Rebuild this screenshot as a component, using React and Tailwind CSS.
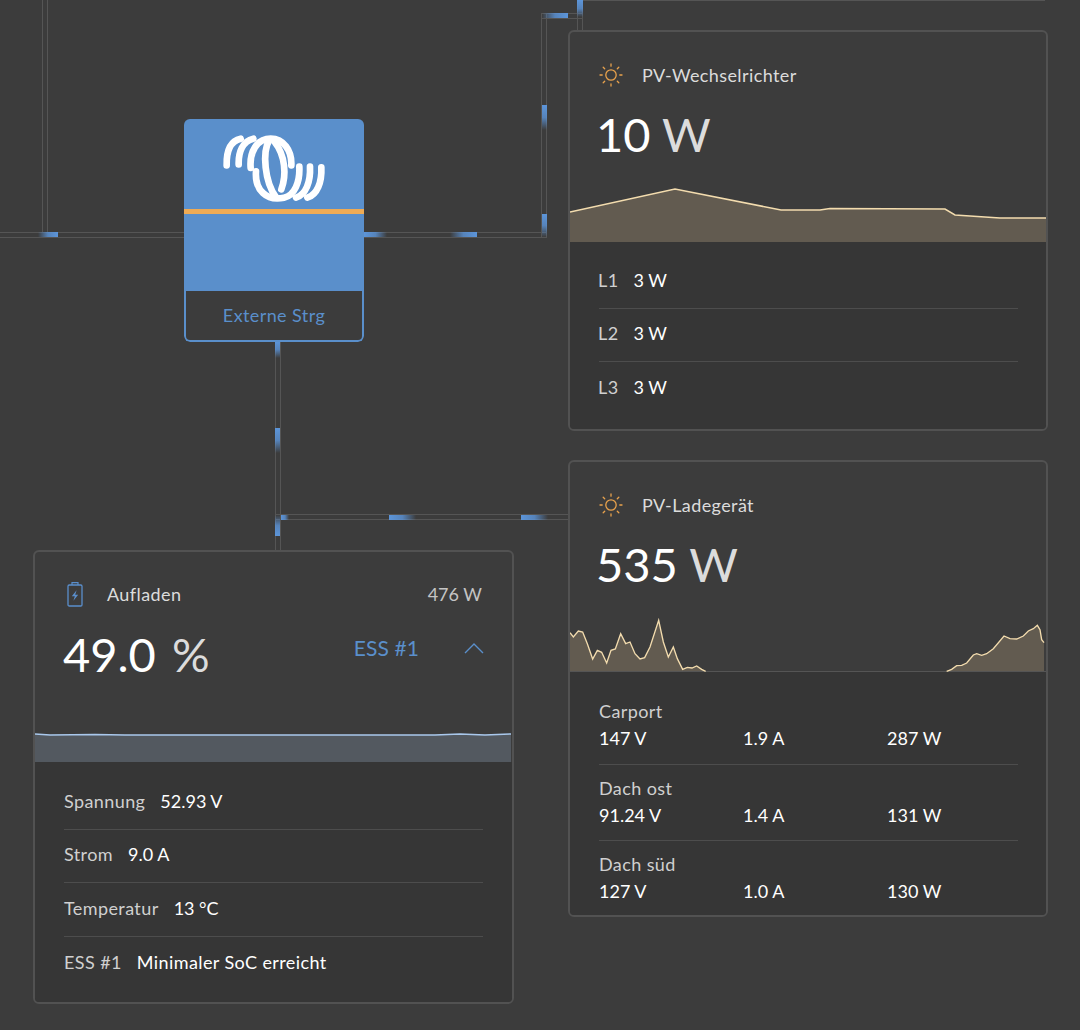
import React from 'react';

const FONT = 'font-["Lato","Open_Sans",sans-serif]';

// Wire pair drawn as two thin lines, placed on the diagram canvas
function HWire({ left, top, width }) {
  return (
    <div
      className="absolute h-[6px] border-y border-[#555555]"
      style={{ left, top, width }}
    />
  );
}

function VWire({ left, top, height }) {
  return (
    <div
      className="absolute w-[6px] border-x border-[#555555]"
      style={{ left, top, height }}
    />
  );
}

function Pulse({ left, top, width, height, dir }) {
  const grads = {
    r: 'bg-gradient-to-r from-[#5c95da00] via-[#5c95dacc] to-[#5c95da]',
    l: 'bg-gradient-to-l from-[#5c95da00] via-[#5c95dacc] to-[#5c95da]',
    b: 'bg-gradient-to-b from-[#5c95da00] via-[#5c95dacc] to-[#5c95da]',
    t: 'bg-gradient-to-t from-[#5c95da00] via-[#5c95dacc] to-[#5c95da]',
  };
  return <div className={`absolute ${grads[dir]}`} style={{ left, top, width, height }} />;
}

function SunIcon() {
  return (
    <svg width="24" height="24" viewBox="0 0 24 24" fill="none" stroke="#e9a24c" strokeWidth="1.3" strokeLinecap="round" className="shrink-0">
      <circle cx="12" cy="12" r="5.2" />
      <path d="M12 1v2.2M12 20.8V23M1 12h2.2M20.8 12H23M4.2 4.2l1.5 1.5M18.3 18.3l1.5 1.5M4.2 19.8l1.5-1.5M18.3 5.7l1.5-1.5" />
    </svg>
  );
}

function BatteryIcon() {
  return (
    <svg width="18" height="26" viewBox="0 0 18 26" fill="none" className="shrink-0">
      <path d="M6 4V1.6h6V4" stroke="#5a8ecb" strokeWidth="1.2" />
      <rect x="2" y="4" width="14" height="21" rx="1.2" stroke="#5a8ecb" strokeWidth="1.3" />
      <path d="M10.6 9.2 5.8 15.2h3l-1.4 4.6 4.8-6h-3z" fill="#5a8ecb" />
    </svg>
  );
}

function Logo() {
  return (
    <svg width="108" height="72" viewBox="0 0 324 216" fill="none" stroke="#ffffff" strokeWidth="20" strokeLinecap="round">
      <path d="M20 100C19 60 30 27 62 20" />
      <path d="M56 97C55 60 68 27 100 20" />
      <path d="M92 108C88 60 110 20 152 20C190 20 216 55 214 100" />
      <path d="M148 24C126 60 134 150 168 196" />
      <path d="M164 30C196 70 200 130 184 172" />
      <path d="M304 106C306 150 292 188 262 197" />
      <path d="M270 104C272 150 258 188 228 197" />
      <path d="M238 104C240 150 224 190 192 197C140 208 104 175 108 118" />
    </svg>
  );
}

function Value({ num, unit, wide }) {
  return (
    <div className="text-[47px] leading-[42px] tracking-normal text-white">
      {num} <span className={wide ? 'ml-[4px] text-[#dcdcdc]' : 'text-[#dcdcdc]'}>{unit}</span>
    </div>
  );
}

function InfoRow({ label, value, text, tight, last }) {
  return (
    <div className={`flex h-[53.5px] items-center gap-[15px] pb-[2px] ${last ? '' : 'border-b border-[#4d4d4d]'}`}>
      <span className={tight ? 'ml-[-1px] text-[#d0d0d0]' : 'text-[#d0d0d0]'}>{label}</span>
      <span className={text ? 'text-white' : 'tracking-normal text-white'}>{value}</span>
    </div>
  );
}

function TrackerRow({ name, v, a, p, last }) {
  return (
    <div className={`h-[76.5px] pt-[11px] ${last ? '' : 'border-b border-[#4d4d4d]'}`}>
      <div className="text-[#d0d0d0] leading-[24px]">{name}</div>
      <div className="mt-[3px] grid grid-cols-[144px_144px_1fr] leading-[24px] tracking-normal text-white">
        <span>{v}</span>
        <span>{a}</span>
        <span>{p}</span>
      </div>
    </div>
  );
}

function Card({ style, children }) {
  return (
    <div
      className="absolute flex flex-col overflow-hidden rounded-[6px] border-2 border-[#525252] bg-[#3c3c3c] text-[18px] tracking-[0.4px]"
      style={style}
    >
      {children}
    </div>
  );
}

const INVERTER_LINE = '0,25 105,2 211,23 250,23 260,21.5 375,22 385,28 430,31 476,31';
const PV_LINE =
  '30,97 40,110 55,92 68,95 82,130 98,176 112,150 125,156 140,188 153,150 166,146 182,100 197,130 210,125 225,160 240,176 254,172 270,140 296,60 310,125 325,170 340,140 352,175 368,207 382,201 396,203 410,197 425,207 437,213';
const PV_LINE_2 =
  '1160,213 1175,207 1190,196 1205,195 1220,188 1240,164 1250,160 1265,165 1280,160 1300,145 1332,107 1350,115 1370,116 1390,107 1405,92 1420,85 1432,75 1440,88 1445,118 1452,127';

export default function App() {
  return (
    <div className={`relative h-[1030px] w-[1080px] overflow-hidden bg-[#3c3c3c] ${FONT}`}>
      {/* wires */}
      <div className="absolute left-[580px] top-0 h-px w-[465px] bg-[#555555]" />
      <VWire left={42} top={0} height={233} />
      <HWire left={0} top={232} width={184} />
      <HWire left={364} top={232} width={183} />
      <VWire left={541} top={13} height={224} />
      <HWire left={541} top={13} width={42} />
      <VWire left={577} top={0} height={31} />
      <VWire left={275} top={341} height={210} />
      <HWire left={275} top={514} width={294} />

      <Pulse left={38} top={232} width={20} height={5} dir="r" />
      <Pulse left={364} top={232} width={23} height={5} dir="l" />
      <Pulse left={450} top={232} width={27} height={5} dir="r" />
      <Pulse left={542} top={214} width={5} height={23} dir="t" />
      <Pulse left={542} top={105} width={5} height={25} dir="t" />
      <Pulse left={542} top={13} width={26} height={5} dir="r" />
      <Pulse left={577} top={0} width={6} height={17} dir="t" />
      <Pulse left={275} top={341} width={5} height={17} dir="t" />
      <Pulse left={275} top={428} width={5} height={25} dir="t" />
      <Pulse left={275} top={515} width={5} height={21} dir="b" />
      <Pulse left={281} top={515} width={8} height={5} dir="l" />
      <Pulse left={389} top={515} width={27} height={5} dir="l" />
      <Pulse left={521} top={515} width={27} height={5} dir="l" />

      {/* system node */}
      <div className="absolute left-[184px] top-[119px] flex h-[223px] w-[180px] flex-col overflow-hidden rounded-[6px]">
        <div className="flex h-[90px] items-start justify-center bg-[#5a8fcb] pt-[13px]">
          <Logo />
        </div>
        <div className="h-[5px] bg-[#efab55]" />
        <div className="h-[77px] bg-[#5a8fcb]" />
        <div className="flex flex-1 items-center justify-center rounded-b-[6px] border-x-2 border-b-2 border-[#5a8fcb] bg-[#3c3c3c] text-[18px] tracking-[0.4px] text-[#5a8fcb]">
          Externe Strg
        </div>
      </div>

      {/* PV inverter */}
      <Card style={{ left: 568, top: 30, width: 480, height: 401 }}>
        <div className="flex h-[81px] shrink-0 items-center gap-[19px] pl-[29px] pt-[5px]">
          <SunIcon />
          <span className="text-[#dcdcdc]">PV-Wechselrichter</span>
        </div>
        <div className="pl-[26px]">
          <Value num="10" unit="W" />
        </div>
        <svg width="476" height="55" viewBox="0 0 476 55" className="mt-[32px] block shrink-0">
          <polygon points={`${INVERTER_LINE} 476,55 0,55`} fill="#625b50" />
          <polyline points={INVERTER_LINE} fill="none" stroke="#f3dcae" strokeWidth="1.5" />
        </svg>
        <div className="flex-1 bg-[#363636] pl-[29px] pr-[28px] pt-[13px]">
          <InfoRow label="L1" value="3 W" tight />
          <InfoRow label="L2" value="3 W" tight />
          <InfoRow label="L3" value="3 W" tight last />
        </div>
      </Card>

      {/* PV charger */}
      <Card style={{ left: 568, top: 460, width: 480, height: 457 }}>
        <div className="flex h-[81px] shrink-0 items-center gap-[19px] pl-[29px] pt-[5px]">
          <SunIcon />
          <span className="text-[#dcdcdc]">PV-Ladegerät</span>
        </div>
        <div className="pl-[26px]">
          <Value num="535" unit="W" />
        </div>
        <svg width="476" height="55" viewBox="30 50 1428 165" className="mt-[32px] block shrink-0">
          <polygon points={`${PV_LINE} 30,213`} fill="#625b50" />
          <polygon points={`${PV_LINE_2} 1452,213`} fill="#625b50" />
          <line x1="30" y1="213.5" x2="1458" y2="213.5" stroke="#555555" strokeWidth="3" />
          <polyline points={PV_LINE} fill="none" stroke="#f3dcae" strokeWidth="4" />
          <polyline points={PV_LINE_2} fill="none" stroke="#f3dcae" strokeWidth="4" />
        </svg>
        <div className="flex-1 bg-[#363636] pl-[29px] pr-[28px] pt-[16px]">
          <TrackerRow name="Carport" v="147 V" a="1.9 A" p="287 W" />
          <TrackerRow name="Dach ost" v="91.24 V" a="1.4 A" p="131 W" />
          <TrackerRow name="Dach süd" v="127 V" a="1.0 A" p="130 W" last />
        </div>
      </Card>

      {/* battery */}
      <Card style={{ left: 33, top: 550, width: 481, height: 454 }}>
        <div className="flex h-[81px] shrink-0 items-center pl-[31px] pr-[30px] pt-[3px]">
          <BatteryIcon />
          <span className="ml-[23px] text-[#dcdcdc]">Aufladen</span>
          <span className="ml-auto tracking-normal text-[#c4c4c4]">476 W</span>
        </div>
        <div className="flex items-center pl-[28px] pr-[28px]">
          <Value num="49.0" unit="%" wide />
          <span className="ml-auto mt-[-12px] text-[21px] tracking-[0.1px] text-[#5a8fcb]">ESS #1</span>
          <svg width="20" height="12" viewBox="0 0 20 12" fill="none" stroke="#5a8fcb" strokeWidth="1.4" className="ml-[45px] mt-[-12px]">
            <path d="M1 11 10 2l9 9" />
          </svg>
        </div>
        <svg width="477" height="30" viewBox="0 0 477 30" className="mt-[57px] block shrink-0">
          <polygon points="0,2 15,3 60,2.5 90,3 265,3 400,3 425,2 450,3 476,2 476,30 0,30" fill="#535960" />
          <polyline points="0,2 15,3 60,2.5 90,3 265,3 400,3 425,2 450,3 476,2" fill="none" stroke="#a9c8ec" strokeWidth="1.5" />
        </svg>
        <div className="flex-1 bg-[#363636] px-[29px] pt-[14px]">
          <InfoRow label="Spannung" value="52.93 V" />
          <InfoRow label="Strom" value="9.0 A" />
          <InfoRow label="Temperatur" value="13 °C" />
          <InfoRow label="ESS #1" value="Minimaler SoC erreicht" text last />
        </div>
      </Card>
    </div>
  );
}
